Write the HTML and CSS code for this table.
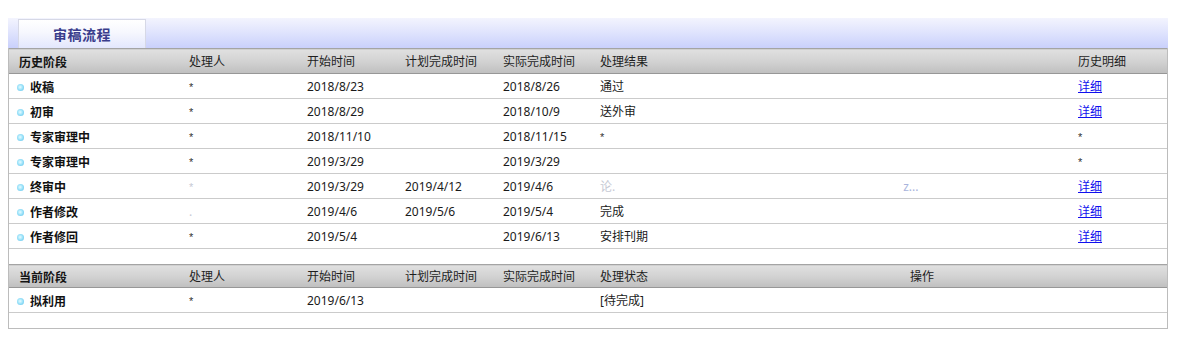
FILE: index.html
```html
<!DOCTYPE html>
<html lang="zh-CN">
<head>
<meta charset="utf-8">
<title>审稿流程</title>
<link rel="stylesheet" href="styles.css">
</head>
<body>
<div class="panel">
  <div class="tabbar">
    <div class="tab">审稿流程</div>
  </div>
  <div class="box">
    <table class="grid">
      <colgroup>
        <col class="c1"><col class="c2"><col class="c3"><col class="c4"><col class="c5"><col class="c6"><col class="c7">
      </colgroup>
      <thead>
        <tr><th class="first">历史阶段</th><th>处理人</th><th>开始时间</th><th>计划完成时间</th><th>实际完成时间</th><th>处理结果</th><th>历史明细</th></tr>
      </thead>
      <tbody>
        <tr><td class="stage"><span class="dot"></span>收稿</td><td><span class="ast">*</span></td><td>2018/8/23</td><td></td><td>2018/8/26</td><td>通过</td><td><a href="#">详细</a></td></tr>
        <tr><td class="stage"><span class="dot"></span>初审</td><td><span class="ast">*</span></td><td>2018/8/29</td><td></td><td>2018/10/9</td><td>送外审</td><td><a href="#">详细</a></td></tr>
        <tr><td class="stage"><span class="dot"></span>专家审理中</td><td><span class="ast">*</span></td><td>2018/11/10</td><td></td><td>2018/11/15</td><td><span class="ast">*</span></td><td><span class="ast">*</span></td></tr>
        <tr><td class="stage"><span class="dot"></span>专家审理中</td><td><span class="ast">*</span></td><td>2019/3/29</td><td></td><td>2019/3/29</td><td></td><td><span class="ast">*</span></td></tr>
        <tr><td class="stage"><span class="dot"></span>终审中</td><td><span class="ast faint">*</span></td><td>2019/3/29</td><td>2019/4/12</td><td>2019/4/6</td><td><span class="faint">论.</span><span class="faint-tail">z...</span></td><td><a href="#">详细</a></td></tr>
        <tr><td class="stage"><span class="dot"></span>作者修改</td><td class="faint">.</td><td>2019/4/6</td><td>2019/5/6</td><td>2019/5/4</td><td>完成</td><td><a href="#">详细</a></td></tr>
        <tr><td class="stage"><span class="dot"></span>作者修回</td><td><span class="ast">*</span></td><td>2019/5/4</td><td></td><td>2019/6/13</td><td>安排刊期</td><td><a href="#">详细</a></td></tr>
        <tr class="spacer"><td colspan="7"></td></tr>
      </tbody>
    </table>
    <table class="grid second">
      <colgroup>
        <col class="c1"><col class="c2"><col class="c3"><col class="c4"><col class="c5"><col class="c6b"><col class="c7b">
      </colgroup>
      <thead>
        <tr><th class="first">当前阶段</th><th>处理人</th><th>开始时间</th><th>计划完成时间</th><th>实际完成时间</th><th>处理状态</th><th>操作</th></tr>
      </thead>
      <tbody>
        <tr><td class="stage"><span class="dot"></span>拟利用</td><td><span class="ast">*</span></td><td>2019/6/13</td><td></td><td></td><td>[待完成]</td><td></td></tr>
        <tr class="spacer"><td colspan="7"></td></tr>
      </tbody>
    </table>
  </div>
</div>
</body>
</html>
```

FILE: styles.css
```css
html, body {
  margin: 0;
  padding: 0;
  background: #ffffff;
}

body {
  padding: 18px 9px 0 8px;
  font-family: "Noto Sans", "Noto Sans CJK SC", sans-serif;
  font-size: 12px;
  color: #1a1a1a;
}

.panel {
  width: 1160px;
}

.tabbar {
  height: 30px;
  box-sizing: border-box;
  padding: 1px 0 0 10px;
  background: linear-gradient(to bottom, #f3f4fe 0%, #dfe3fd 50%, #c9d0fc 100%);
  display: flex;
  align-items: flex-end;
}

.tab {
  width: 128px;
  height: 29px;
  box-sizing: border-box;
  border: 1px solid #d6d8e6;
  border-bottom: none;
  background: linear-gradient(to bottom, #ffffff 0%, #f6f7fe 45%, #e3e7fd 100%);
  color: #3a3d8c;
  font-family: "Noto Sans CJK SC", sans-serif;
  font-weight: bold;
  font-size: 14px;
  letter-spacing: 0.5px;
  display: flex;
  align-items: center;
  justify-content: center;
  padding-bottom: 1px;
}

.box {
  border-left: 1px solid #bcbcbc;
  border-right: 1px solid #bcbcbc;
  border-bottom: 1px solid #bcbcbc;
}

.grid {
  width: 100%;
  table-layout: fixed;
  border-collapse: collapse;
}

.c1 { width: 170px; }
.c2 { width: 118px; }
.c3 { width: 98px; }
.c4 { width: 98px; }
.c5 { width: 97px; }
.c6 { width: 478px; }
.c7 { width: 99px; }
.c6b { width: 310px; }
.c7b { width: 267px; }

.grid th {
  height: 24px;
  padding: 0 0 0 10px;
  text-align: left;
  font-weight: normal;
  color: #1e1e1e;
  white-space: nowrap;
  background: linear-gradient(to bottom, #e0e0e0 0%, #d2d2d2 50%, #bfbfbf 100%);
  border-top: 1px solid #a4a4a4;
  border-bottom: 1px solid #979797;
}

.second th {
  height: 22px;
}

.grid th.first {
  font-family: "Noto Sans CJK SC", sans-serif;
  font-weight: bold;
  color: #141414;
}

.grid td {
  height: 24px;
  padding: 0 0 0 10px;
  border-bottom: 1px solid #cbcbcb;
  white-space: nowrap;
  overflow: hidden;
}

.grid td.stage {
  padding-left: 8px;
  font-family: "Noto Sans CJK SC", sans-serif;
  font-weight: bold;
  color: #111;
}

.ast {
  font-family: "Liberation Sans", sans-serif;
  font-size: 11px;
  vertical-align: 0;
  color: #333;
}

.dot {
  display: inline-block;
  width: 7px;
  height: 7px;
  border-radius: 50%;
  margin-right: 6px;
  vertical-align: 1px;
  background: radial-gradient(circle at 45% 45%, #e8fbff 0%, #9fe4fa 45%, #4fb9e6 100%);
}

.grid td a {
  color: #1010ee;
  text-decoration: underline;
}

.grid tr.spacer td {
  height: 15px;
  border-bottom: none;
}

.faint {
  color: #c6c9d4;
}

.faint-tail {
  color: #a9b4dc;
  margin-left: 288px;
}
```
